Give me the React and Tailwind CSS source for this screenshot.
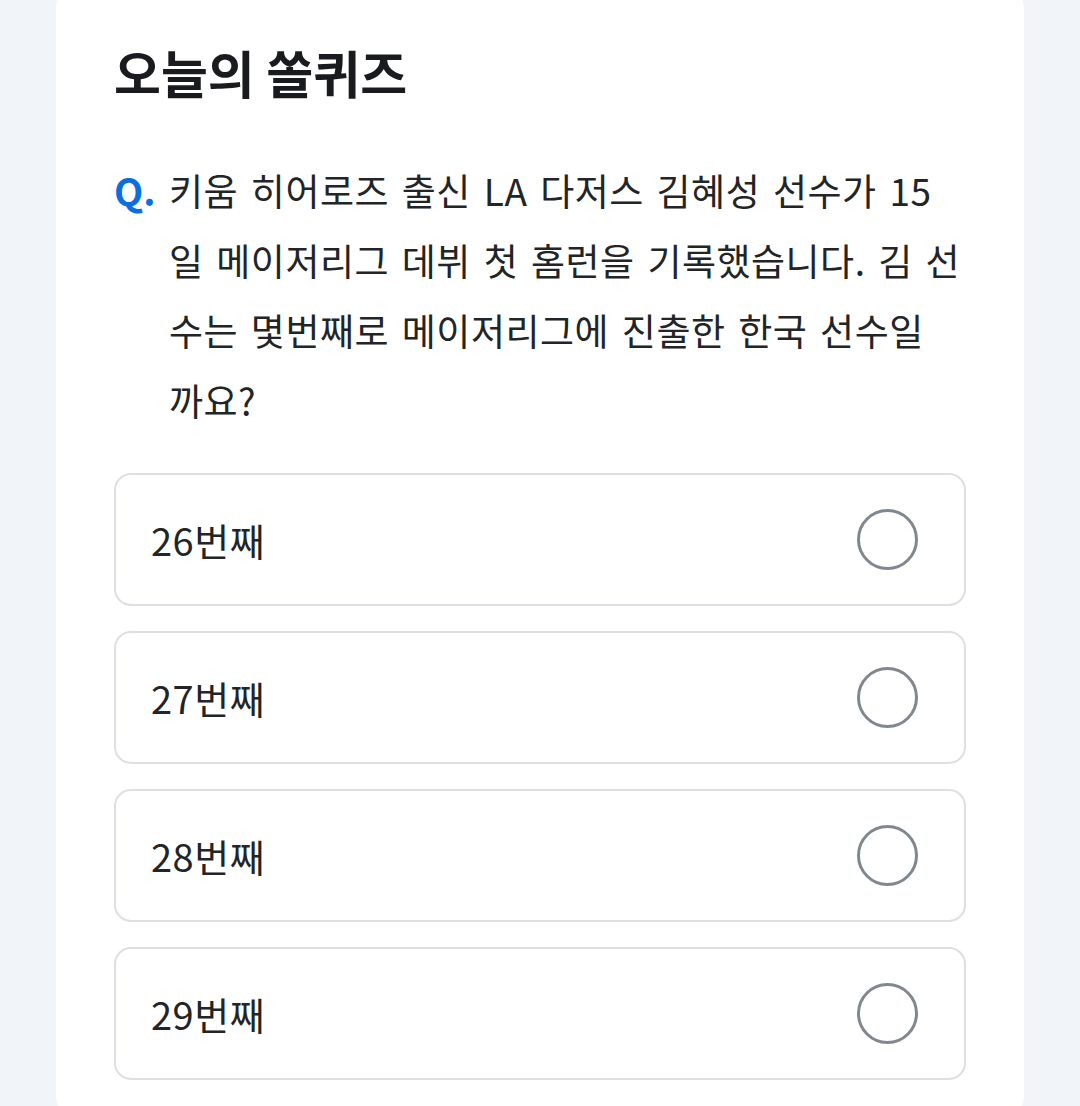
import React from 'react';

const options = ['26번째', '27번째', '28번째', '29번째'];

// 질문은 원본과 같은 위치에서 줄바꿈
const questionLines = [
  '키움 히어로즈 출신 LA 다저스 김혜성 선수가 15',
  '일 메이저리그 데뷔 첫 홈런을 기록했습니다. 김 선',
  '수는 몇번째로 메이저리그에 진출한 한국 선수일',
  '까요?',
];

const font = { fontFamily: '"Noto Sans CJK KR", "Noto Sans", sans-serif' };

const App = () => {
  return (
    <div className="min-h-[1106px] bg-[#f1f4f9] px-[56px] overflow-hidden" style={font}>
      <div className="-mt-4 rounded-3xl bg-white px-[58px] pt-[58px] pb-10">
        <h1 className="text-[51px] leading-[60px] font-bold text-[#191b1e]">오늘의 쏠퀴즈</h1>

        <div className="mt-[53px] flex">
          <div className="w-[55px] shrink-0 text-[38px] leading-[70px] font-bold text-[#0b6ee0]">Q.</div>
          <div className="text-[37px] leading-[70px] text-[#222426] tracking-[0.5px] [word-spacing:4px]">
            {questionLines.map((line, i) => (
              <div key={i} className="whitespace-nowrap">{line}</div>
            ))}
          </div>
        </div>

        <div className="mt-[38px] flex flex-col gap-[25px]">
          {options.map((opt) => (
            <div
              key={opt}
              className="flex h-[133px] items-center justify-between rounded-[17px] border-2 border-[#dcdfe3] pl-[35px] pr-[46px]"
            >
              <span className="text-[38px] tracking-[0.5px] text-[#222426]">{opt}</span>
              <span className="h-[61px] w-[61px] rounded-full border-[3px] border-[#80878f]" />
            </div>
          ))}
        </div>
      </div>
    </div>
  );
};

export default App;
